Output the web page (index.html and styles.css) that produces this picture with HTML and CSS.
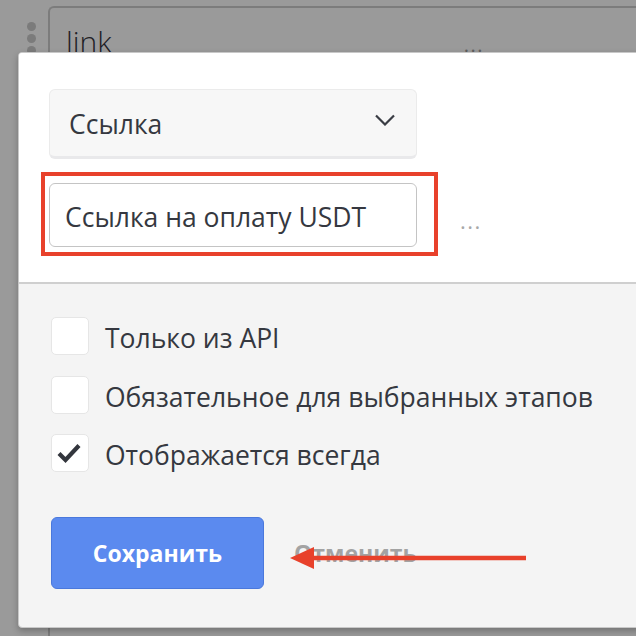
FILE: index.html
```html
<!DOCTYPE html>
<html lang="ru">
<head>
<meta charset="utf-8">
<link rel="stylesheet" href="styles.css">
</head>
<body>
<div class="stage">
  <div class="bg-row">
    <div class="handle"><span></span><span></span><span></span></div>
    <div class="card">
      <span class="card-title">link</span>
      <span class="card-more">...</span>
    </div>
  </div>

  <div class="popup">
    <div class="popup-top">
      <div class="select">
        <span class="txt">Ссылка</span>
        <svg class="chev" width="20" height="12" viewBox="0 0 20 12"><path d="M1 1.5 L10 10.5 L19 1.5" fill="none" stroke="#3a3d44" stroke-width="2.2"/></svg>
      </div>
      <div class="input-row">
        <div class="input"><span class="txt">Ссылка на оплату USDT</span></div>
        <span class="more">...</span>
        <div class="highlight"></div>
      </div>
    </div>
    <div class="popup-bottom">
      <label class="check-row"><span class="box"></span><span class="lbl">Только из API</span></label>
      <label class="check-row"><span class="box"></span><span class="lbl">Обязательное для выбранных этапов</span></label>
      <label class="check-row"><span class="box"><svg width="26" height="22" viewBox="0 0 26 22"><path d="M3 11.5 L9.5 18 L23 3.5" fill="none" stroke="#33363d" stroke-width="4.2" stroke-linejoin="miter"/></svg></span><span class="lbl">Отображается всегда</span></label>
      <div class="actions">
        <button class="btn-save">Сохранить</button>
        <span class="btn-cancel">Отменить</span>
        <svg class="arrow" width="240" height="24" viewBox="0 0 240 24"><path d="M22 12 L236 12" stroke="#e8412b" stroke-width="4.5"/><path d="M0 12 L24 1 L24 23 Z" fill="#e8412b"/></svg>
      </div>
    </div>
  </div>
</div>
</body>
</html>
```

FILE: styles.css
```css
* { box-sizing: border-box; }
html, body { margin: 0; padding: 0; }
body {
  width: 636px;
  height: 636px;
  overflow: hidden;
  background: #9a9a9a;
  font-family: "Open Sans", "Noto Sans", sans-serif;
  color: #353840;
}
.stage { position: relative; width: 636px; height: 636px; overflow: hidden; }

.bg-row { display: flex; padding-top: 6px; }
.handle {
  display: flex;
  flex-direction: column;
  gap: 3px;
  padding: 16px 0 0 27px;
  width: 48px;
}
.handle span {
  width: 9px; height: 9px; border-radius: 50%;
  background: #7b7b7b;
}
.card {
  flex: 1;
  height: 700px;
  border: 2px solid #7c7c7c;
  border-right: none;
  border-radius: 6px 0 0 6px;
  padding: 14px 0 0 16px;
  display: flex;
  align-items: flex-start;
}
.card-title {
  font-size: 30px;
  line-height: 40px;
  color: #1e2026;
  font-weight: 300;
}
.card-more {
  margin-left: 352px;
  margin-top: 9px;
  font-size: 20px;
  color: #5e5e5e;
  letter-spacing: 1.5px;
}

.popup {
  position: absolute;
  left: 18px;
  top: 52px;
  width: 660px;
  height: 576px;
  background: #f4f4f4;
  border: 1px solid #c8c8c8;
  border-radius: 4px;
  box-shadow: 0 3px 6px rgba(0,0,0,0.25);
  display: flex;
  flex-direction: column;
  overflow: hidden;
}
.popup-top {
  background: #fff;
  height: 231px;
  border-bottom: 2px solid #cfcfcf;
  padding: 36px 0 0 30px;
}
.select {
  width: 368px;
  height: 70px;
  background: #f7f7f7;
  border: 1px solid #ebebeb;
  border-bottom: 3px solid #e9e9eb;
  border-radius: 6px;
  display: flex;
  align-items: center;
  justify-content: space-between;
  padding: 0 21px 2px 19px;
  font-size: 26.5px;
}
.txt { position: relative; top: 2px; }
.chev { margin-top: -4px; }

.input-row {
  position: relative;
  display: flex;
  align-items: center;
  margin-top: 24px;
}
.input {
  width: 368px;
  height: 64px;
  background: #fff;
  border: 1.5px solid #c4c4c4;
  border-radius: 6px;
  display: flex;
  align-items: center;
  padding: 0 0 0 15px;
  font-size: 26.5px;
}
.more {
  margin-left: 43px;
  margin-top: 10px;
  font-size: 22px;
  color: #a8a8a8;
  letter-spacing: 1.5px;
}
.highlight {
  position: absolute;
  left: -8px;
  top: -11px;
  width: 397px;
  height: 84px;
  border: 4px solid #e8412b;
}

.popup-bottom {
  flex: 1;
  display: flex;
  flex-direction: column;
  gap: 21px;
  padding: 33px 0 0 32px;
}
.check-row {
  display: flex;
  align-items: center;
  height: 38px;
}
.check-row:nth-child(2) { margin-bottom: -1px; }
.box {
  width: 38px;
  height: 38px;
  background: #fff;
  border: 1.5px solid #e6e6e6;
  border-radius: 5px;
  display: flex;
  align-items: center;
  justify-content: center;
}
.box svg { margin-left: -2px; }
.lbl {
  margin-left: 16px;
  font-size: 26.5px;
  position: relative;
  top: 2px;
}

.actions {
  position: relative;
  display: flex;
  align-items: center;
  margin-top: 24px;
}
.btn-save {
  width: 213px;
  height: 72px;
  background: #5b8aef;
  border: 1.5px solid #4a78dc;
  border-radius: 6px;
  color: #fff;
  font-family: "Open Sans", "Noto Sans", sans-serif;
  font-weight: 700;
  font-size: 23px;
  padding: 0;
}
.btn-cancel {
  margin-left: 30px;
  font-size: 23px;
  font-weight: 700;
  color: #a3a3a3;
}
.arrow {
  position: absolute;
  left: 239px;
  top: 29px;
}
```
